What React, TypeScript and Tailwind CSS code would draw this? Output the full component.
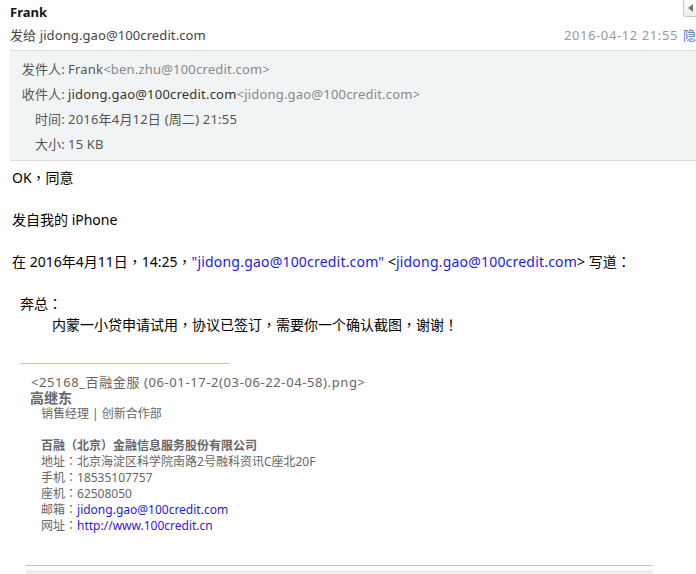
import React from "react";

function P({ text }: { text: string }) {
  const parts = text.split(/([，：！])/);
  return (
    <>
      {parts.map((p, i) =>
        /^[，：！]$/.test(p) ? (
          <span key={i} className="leading-none font-['Noto_Sans_CJK_TC',sans-serif]">
            {p}
          </span>
        ) : (
          <React.Fragment key={i}>{p}</React.Fragment>
        )
      )}
    </>
  );
}

export default function App() {
  return (
    <div className="w-[696px] h-[574px] overflow-hidden bg-white text-[#222] font-['Noto_Sans','Noto_Sans_CJK_SC',sans-serif]">
      {/* Header */}
      <div className="flex items-start justify-between pl-[10px] h-[24px]">
        <div className="text-[13px] leading-[24px] font-bold text-[#111]">Frank</div>
        <div className="w-[13px] h-[17px] border-l border-b border-[#c9c9c9] rounded-bl-[2px] bg-gradient-to-b from-white to-[#ececec] flex items-center">
          <span className="ml-[4px] w-0 h-0 border-y-[4px] border-y-transparent border-r-[5px] border-r-[#777]" />
        </div>
      </div>
      <div className="flex items-center justify-between pl-[10px] h-[24px] text-[13px] whitespace-nowrap">
        <div className="text-[#444] tracking-[0.1px]">发给 jidong.gao@100credit.com</div>
        <div className="flex items-center">
          <span className="text-[#999] tracking-[0.6px]">2016-04-12 21:55</span>
          <span className="ml-[5px] inline-block w-[13px] overflow-hidden text-[#4a7cc4]">隐藏</span>
        </div>
      </div>

      {/* Info box */}
      <div className="ml-[10px] mt-[2px] border-t border-b border-[#dcdede] bg-[#f1f4f4] pt-[6px] pb-[3px] text-[13px] text-[#555] tracking-[0.2px]">
        <div className="flex h-[25px] items-center">
          <span className="w-[55px] text-right">发件人:</span>
          <span className="ml-[3px]">Frank</span>
          <span className="text-[#888]">&lt;ben.zhu@100credit.com&gt;</span>
        </div>
        <div className="flex h-[25px] items-center">
          <span className="w-[55px] text-right">收件人:</span>
          <span className="ml-[3px] text-[#333]">jidong.gao@100credit.com</span>
          <span className="text-[#888]">&lt;jidong.gao@100credit.com&gt;</span>
        </div>
        <div className="flex h-[25px] items-center">
          <span className="w-[55px] text-right">时间:</span>
          <span className="ml-[3px]">2016年4月12日 (周二) 21:55</span>
        </div>
        <div className="flex h-[25px] items-center">
          <span className="w-[55px] text-right">大小:</span>
          <span className="ml-[3px]">15 KB</span>
        </div>
      </div>

      {/* Body */}
      <div className="pl-[12px] pt-[6px] text-[14px] leading-[21px] text-black whitespace-nowrap">
        <div className="h-[21px]">
          <P text="OK，同意" />
        </div>
        <div className="h-[21px]" />
        <div className="h-[21px]">发自我的 iPhone</div>
        <div className="h-[21px]" />
        <div className="h-[21px]">
          <P text="在 2016年4月11日，14:25，" />
          <span className="text-[#1c1ce0] tracking-[0.2px]">"jidong.gao@100credit.com"</span>{" "}
          &lt;<span className="text-[#1c1ce0] tracking-[0.2px]">jidong.gao@100credit.com</span>&gt; 写道
          <P text="：" />
        </div>
        <div className="h-[21px]" />
        <div className="h-[21px] pl-[8px]">
          <P text="奔总：" />
        </div>
        <div className="h-[21px] pl-[40px]">
          <P text="内蒙一小贷申请试用，协议已签订，需要你一个确认截图，谢谢！" />
        </div>
      </div>

      {/* Signature */}
      <div className="mt-[28px] ml-[20px] w-[209px] border-t border-[#b7c5e2]" />
      <div className="mt-[10px] pl-[31px] text-[12px] leading-[16px] text-[#666] whitespace-nowrap">
        <div className="h-[16px] text-[13px] tracking-[0.6px]">&lt;25168_百融金服 (06-01-17-2(03-06-22-04-58).png&gt;</div>
        <div className="h-[16px] -ml-[1px] text-[14px] leading-[16px] font-bold">高继东</div>
        <div className="pl-[10px]">
          <div className="h-[16px]">销售经理 | 创新合作部</div>
          <div className="h-[16px]" />
          <div className="h-[16px] font-bold">百融（北京）金融信息服务股份有限公司</div>
          <div className="h-[16px]">
            <P text="地址：北京海淀区科学院南路2号融科资讯C座北20F" />
          </div>
          <div className="h-[16px]">
            <P text="手机：18535107757" />
          </div>
          <div className="h-[16px]">
            <P text="座机：62508050" />
          </div>
          <div className="h-[16px]">
            <P text="邮箱：" />
            <span className="text-[#1c1ce0]">jidong.gao@100credit.com</span>
          </div>
          <div className="h-[16px]">
            <P text="网址：" />
            <span className="text-[#3a16d8]">http://www.100credit.cn</span>
          </div>
        </div>
      </div>
      <div className="mt-[31px] ml-[26px] w-[627px] border-t border-[#b7c5e2]" />
      <div className="mt-[4px] ml-[26px] w-[627px] h-[4px] bg-[#eeeeee]" />
    </div>
  );
}
